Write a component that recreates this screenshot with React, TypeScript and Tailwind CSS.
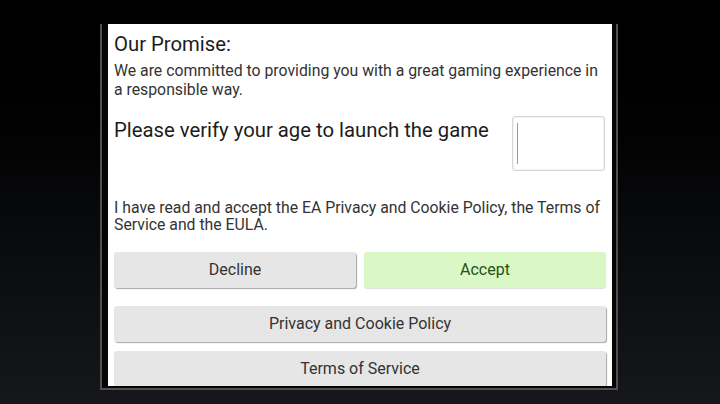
import React from 'react';

const font = { fontFamily: 'Roboto, "Noto Sans", sans-serif' };

function Btn({ label, green = false, className = '' }: { label: string; green?: boolean; className?: string }) {
  return (
    <button
      className={`h-[36px] rounded-[3px] text-[16px] ${green ? 'bg-[#d9f8c6] text-[#265217] shadow-[0_1px_1px_rgba(0,0,0,0.12)]' : 'bg-[#e6e6e6] text-[#333] shadow-[1px_1px_1px_rgba(0,0,0,0.35)]'} ${className}`}
    >
      {label}
    </button>
  );
}

export default function App() {
  return (
    <div className="w-[720px] h-[404px] overflow-hidden bg-gradient-to-b from-[#000] via-[#07080a] to-[#15171b]" style={font}>
      <div className="ml-[100px] mt-[24px] w-[518px] h-[366px] border-x-2 border-b-2 border-[#505050] bg-[#050505] pl-[6px] pr-[4px] pb-[2px]">
        <div className="h-full bg-white px-[6px] pt-[8px] overflow-hidden">
          <h1 className="text-[20.3px] leading-[24px] text-[#1c1c1c]">Our Promise:</h1>
          <p className="mt-[5px] text-[15.8px] leading-[19px] text-[#333]">
            We are committed to providing you with a great gaming experience in a responsible way.
          </p>

          <div className="mt-[17px] flex items-start">
            <div className="flex-1 mt-[2px] text-[20.3px] leading-[24px] text-[#1c1c1c]">Please verify your age to launch the game</div>
            <div className="w-[93px] h-[55px] mr-[1px] rounded-[3px] border border-[#d6d6d6] shadow-[inset_0_0_2px_rgba(0,0,0,0.15)] bg-white pl-[4px] py-[6px]">
              <div className="w-[1px] h-full bg-[#9a9a9a]" />
            </div>
          </div>

          <p className="mt-[28px] text-[15.8px] leading-[17px] text-[#333]">
            I have read and accept the EA Privacy and Cookie Policy, the Terms of Service and the EULA.
          </p>

          <div className="mt-[19px] flex gap-[8px]">
            <Btn label="Decline" className="flex-1" />
            <Btn label="Accept" green className="flex-1" />
          </div>
          <div className="mt-[18px] flex flex-col gap-[9px]">
            <Btn label="Privacy and Cookie Policy" className="w-full" />
            <Btn label="Terms of Service" className="w-full" />
          </div>
        </div>
      </div>
    </div>
  );
}
